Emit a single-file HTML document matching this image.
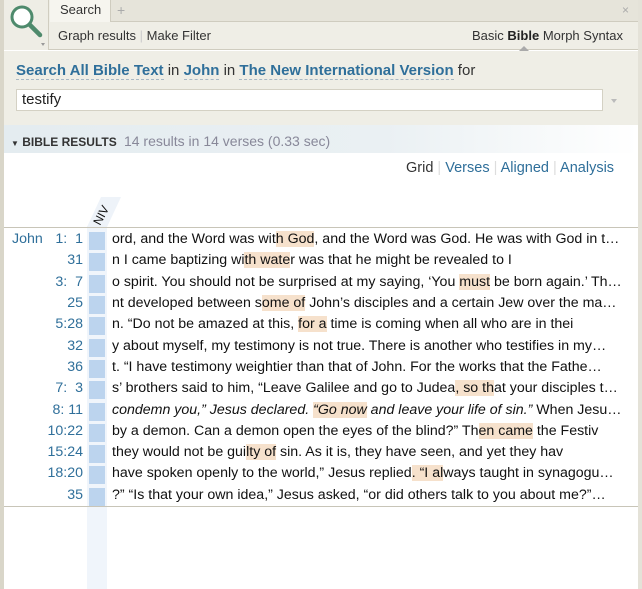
<!DOCTYPE html>
<html><head><meta charset="utf-8"><style>
*{margin:0;padding:0;box-sizing:border-box}
body{width:642px;height:589px;overflow:hidden;background:#fff;font-family:"Liberation Sans",sans-serif;position:relative}
.abs{position:absolute}
.lb{position:absolute;left:0;top:0;width:4px;height:589px;background:#d9d6c9}
.rb{position:absolute;right:0;top:0;width:4px;height:589px;background:#e4e2d8}
.top{position:absolute;left:4px;top:0;width:634px;height:50px;background:#efeee6;border-bottom:1px solid #cfccbf}
.ico{position:absolute;left:4px;top:0;width:45px;height:50px;border-right:1px solid #d0cdc0;background:#eeede5}
.tab{position:absolute;left:50px;top:0;width:61px;height:22px;background:#f6f5ef;border-right:1px solid #cfccbf;font-size:13px;color:#333;padding:2px 0 0 10px}
.tabbar{position:absolute;left:111px;top:0;width:527px;height:22px;background:#e6e4da;border-bottom:1px solid #cfccbf}
.tb{font-size:13px;color:#333}
.form{position:absolute;left:4px;top:51px;width:634px;height:74px;background:#efeee6}
.lnk{color:#2f6f9a;font-weight:bold;border-bottom:1px dashed #a8b8c4}
.hdr{position:absolute;left:4px;top:125px;width:634px;height:28px;background:linear-gradient(90deg,#e4ecf0 0%,#eaf0f3 60%,#fff 100%)}
.row{position:absolute;left:4px;width:634px;height:21px;font-size:14.2px;color:#111;white-space:nowrap}
.ref{position:absolute;right:555px;top:1px;color:#2f6f9a;text-align:right}
.sq{position:absolute;left:85px;top:2px;width:16px;height:18px;background:#bcd4ee}
.tx{position:absolute;left:108px;top:1px;width:524px;overflow:hidden}
.h{background:#f6e1cc}
</style></head><body>
<div class="lb"></div><div class="rb"></div>
<div class="top"></div>
<div class="ico"><svg width="45" height="50"><circle cx="18" cy="17" r="10" fill="#fff" stroke="#4e8a6c" stroke-width="3"/><line x1="26" y1="25" x2="36" y2="35" stroke="#4e8a6c" stroke-width="4.5" stroke-linecap="round"/><path d="M37 43 l4 0 l-2 3z" fill="#999"/></svg></div>
<div class="tabbar"></div>
<div class="tab">Search</div>
<div class="abs" style="left:117px;top:2px;color:#aaa;font-size:14px">+</div>
<div class="abs" style="left:622px;top:3px;color:#aaa;font-size:12px">×</div>
<div class="abs tb" style="left:58px;top:28px">Graph results <span style="color:#ccc">|</span> Make Filter</div>
<div class="abs tb" style="left:472px;top:28px">Basic <b style="color:#222">Bible</b> Morph Syntax</div>
<div class="abs" style="left:519px;top:46px;width:0;height:0;border-left:5px solid transparent;border-right:5px solid transparent;border-bottom:5px solid #aaa"></div>
<div class="form"></div>
<div class="abs" style="left:16px;top:62px;font-size:15px;color:#333"><span class="lnk">Search All Bible Text</span> in <span class="lnk">John</span> in <span class="lnk">The New International Version</span> for</div>
<div class="abs" style="left:16px;top:89px;width:587px;height:22px;background:#fff;border:1px solid #d4d1c4;font-size:15px;padding:1px 5px;color:#222">testify</div>
<div class="abs" style="left:611px;top:99px;width:0;height:0;border-left:3px solid transparent;border-right:3px solid transparent;border-top:4px solid #bbb"></div>
<div class="hdr"></div>
<div class="abs" style="left:11px;top:133px;font-size:12px;color:#333"><span style="font-size:8px">▼</span> <b>BIBLE RESULTS</b> <span style="color:#889;font-size:14px">&nbsp;14 results in 14 verses (0.33 sec)</span></div>
<div class="abs" style="left:406px;top:160px;font-size:14.5px;color:#333">Grid <span style="color:#ddd">|</span> <span style="color:#2f6f9a">Verses</span> <span style="color:#ddd">|</span> <span style="color:#2f6f9a">Aligned</span> <span style="color:#ddd">|</span> <span style="color:#2f6f9a">Analysis</span></div>
<div class="abs" style="left:87px;top:226px;width:20px;height:363px;background:#f0f5fb"></div>
<svg class="abs" style="left:80px;top:195px" width="50" height="35"><polygon points="7,32 27,32 41,2 21,2" fill="#eef3f9"/><text x="0" y="0" font-size="12" font-family="Liberation Sans" fill="#111" transform="translate(20,31) rotate(-62)">NIV</text></svg>
<div class="abs" style="left:4px;top:227px;width:634px;height:1px;background:#c8c5b8"></div>
<div class="abs" style="left:4px;top:506px;width:634px;height:1px;background:#c8c5b8"></div>
<div class="abs" style="left:12px;top:231px;font-size:14.2px;color:#2f6f9a">John</div>
<div class="row" style="top:230px"><span class="ref">1:&nbsp; 1</span><div class="sq"></div><div class="tx">ord, and the Word was wit<span class="h">h God</span>, and the Word was God. He was with God in t…</div></div>
<div class="row" style="top:251px"><span class="ref">31</span><div class="sq"></div><div class="tx">n I came baptizing wi<span class="h">th wate</span>r was that he might be revealed to I</div></div>
<div class="row" style="top:273px"><span class="ref">3:&nbsp; 7</span><div class="sq"></div><div class="tx">o spirit. You should not be surprised at my saying, ‘You <span class="h">must</span> be born again.’ Th…</div></div>
<div class="row" style="top:294px"><span class="ref">25</span><div class="sq"></div><div class="tx">nt developed between s<span class="h">ome of</span> John’s disciples and a certain Jew over the ma…</div></div>
<div class="row" style="top:315px"><span class="ref">5:28</span><div class="sq"></div><div class="tx">n. “Do not be amazed at this, <span class="h">for a</span> time is coming when all who are in thei</div></div>
<div class="row" style="top:337px"><span class="ref">32</span><div class="sq"></div><div class="tx">y about myself, my testimony is not true. There is another who testifies in my…</div></div>
<div class="row" style="top:358px"><span class="ref">36</span><div class="sq"></div><div class="tx">t. “I have testimony weightier than that of John. For the works that the Fathe…</div></div>
<div class="row" style="top:379px"><span class="ref">7:&nbsp; 3</span><div class="sq"></div><div class="tx">s’ brothers said to him, “Leave Galilee and go to Judea<span class="h">, so th</span>at your disciples t…</div></div>
<div class="row" style="top:401px"><span class="ref">8:&nbsp;11</span><div class="sq"></div><div class="tx"><i>condemn you,” Jesus declared. <span class="h">“Go now</span> and leave your life of sin.”</i> When Jesu…</div></div>
<div class="row" style="top:422px"><span class="ref">10:22</span><div class="sq"></div><div class="tx">by a demon. Can a demon open the eyes of the blind?” Th<span class="h">en came</span> the Festiv</div></div>
<div class="row" style="top:443px"><span class="ref">15:24</span><div class="sq"></div><div class="tx">they would not be gui<span class="h">lty of</span> sin. As it is, they have seen, and yet they hav</div></div>
<div class="row" style="top:464px"><span class="ref">18:20</span><div class="sq"></div><div class="tx">have spoken openly to the world,” Jesus replied<span class="h">. “I al</span>ways taught in synagogu…</div></div>
<div class="row" style="top:486px"><span class="ref">35</span><div class="sq"></div><div class="tx">?” “Is that your own idea,” Jesus asked, “or did others talk to you about me?”…</div></div>
</body></html>
